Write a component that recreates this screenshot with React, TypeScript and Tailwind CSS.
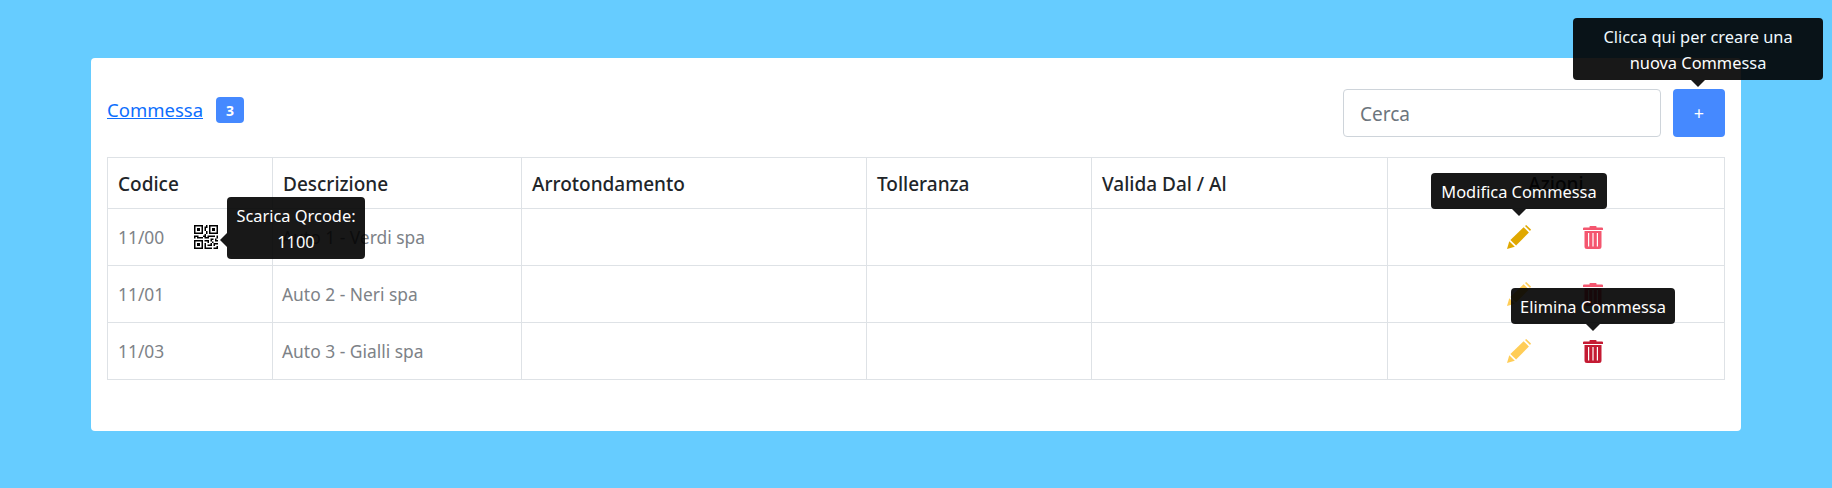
import React from 'react';
import { BsQrCode } from 'react-icons/bs';

const columns = [
    { label: 'Codice', width: 'w-[165px]' },
    { label: 'Descrizione', width: 'w-[249px]' },
    { label: 'Arrotondamento', width: 'w-[345px]' },
    { label: 'Tolleranza', width: 'w-[225px]' },
    { label: 'Valida Dal / Al', width: 'w-[296px]' },
];

const rows = [
    { code: '11/00', desc: 'Auto 1 - Verdi spa', qr: true, pencil: 'text-[#e0a800]', trash: 'text-[#f4566f]' },
    { code: '11/01', desc: 'Auto 2 - Neri spa', qr: false, pencil: 'text-[#ffcd57]', trash: 'text-[#f4566f]' },
    { code: '11/03', desc: 'Auto 3 - Gialli spa', qr: false, pencil: 'text-[#ffcd57]', trash: 'text-[#c41a33]' },
];

const PencilIcon: React.FC<{ className: string }> = ({ className }) => (
    <svg className={className} width="24" height="24" viewBox="0 0 24 24" fill="currentColor">
        <path d="M0 24 L2.3 16.2 L7.8 21.7 Z" />
        <path d="M3.4 14.9 L16.6 2.2 L21.9 7.5 L9.1 20.6 Z" />
        <path d="M18 1 L19.2 0 L24 4.6 L23 6.1 Z" />
    </svg>
);

const TrashIcon: React.FC<{ className: string }> = ({ className }) => (
    <svg className={className} width="20" height="23" viewBox="0 0 20 23" fill="currentColor">
        <path d="M6.5 0.6 Q6.5 0 7.2 0 H12.8 Q13.5 0 13.5 0.6 V1.4 H19 Q20 1.4 20 2.4 V4 H0 V2.4 Q0 1.4 1 1.4 H6.5 Z" />
        <path
            fillRule="evenodd"
            d="M1.5 5 H18.5 V20.5 Q18.5 23 16 23 H4 Q1.5 23 1.5 20.5 Z M5 7 V20.4 H6.2 V7 Z M9.4 7 V20.4 H10.6 V7 Z M13.8 7 V20.4 H15 V7 Z"
        />
    </svg>
);

const Tooltip: React.FC<{ className: string; side?: 'top' | 'right'; children: React.ReactNode }> = ({
    className,
    side = 'top',
    children,
}) => (
    <div className={`absolute z-10 opacity-90 ${className}`}>
        <div className="rounded bg-black px-2 pb-[4px] pt-[6px] text-center text-[16.4px] leading-[26px] text-white">{children}</div>
        {side === 'top' ? (
            <div className="absolute left-1/2 top-full -ml-[7px] border-x-[7px] border-t-[7px] border-x-transparent border-t-black" />
        ) : (
            <div className="absolute right-full top-[36px] border-y-[7px] border-r-[7px] border-y-transparent border-r-black" />
        )}
    </div>
);

export default function App() {
    return (
        <div className="relative h-[488px] overflow-hidden bg-[#66ccff] pl-[91px] pt-[58px] font-['Noto_Sans',sans-serif]">
            <div className="h-[373px] w-[1650px] rounded bg-white px-4 pt-[31px]">
                <div className="flex h-12 items-center justify-between">
                    <div className="flex items-center gap-[13px] pb-[6px]">
                        <a href="#" className="text-[18.5px] text-[#0d6efd] underline">
                            Commessa
                        </a>
                        <span className="flex h-[26px] w-[28px] items-center justify-center rounded bg-[#4589ff] text-[14px] font-bold text-white">
                            3
                        </span>
                    </div>
                    <div className="flex items-center gap-3">
                        <input
                            placeholder="Cerca"
                            className="h-12 w-[318px] rounded border border-[#ced4da] bg-white px-4 pt-[2px] text-[19px] text-[#6c757d] placeholder:text-[#6c757d]"
                        />
                        <button className="flex h-12 w-[52px] items-center justify-center rounded bg-[#4589ff] text-[18px] text-white">
                            +
                        </button>
                    </div>
                </div>

                <table className="mt-5 w-[1617px] table-fixed border-collapse">
                    <thead>
                        <tr className="h-[51px]">
                            {columns.map((col) => (
                                <th
                                    key={col.label}
                                    className={`${col.width} border border-[#dee2e6] px-[10px] pt-[2px] text-left text-[19px] font-medium text-[#212529]`}
                                >
                                    {col.label}
                                </th>
                            ))}
                            <th className="w-[337px] border border-[#dee2e6] pt-[2px] text-center text-[19px] font-medium text-[#212529]">
                                Azioni
                            </th>
                        </tr>
                    </thead>
                    <tbody>
                        {rows.map((row) => (
                            <tr key={row.code} className="h-[57px] text-[17.4px] text-[#7d8287]">
                                <td className="border border-[#dee2e6] px-[10px]">
                                    <div className="flex items-center">
                                        <span className="w-[76px]">{row.code}</span>
                                        {row.qr && <BsQrCode className="text-black" size={24} />}
                                    </div>
                                </td>
                                <td className="border border-[#dee2e6] px-[9px]">{row.desc}</td>
                                <td className="border border-[#dee2e6]" />
                                <td className="border border-[#dee2e6]" />
                                <td className="border border-[#dee2e6]" />
                                <td className="border border-[#dee2e6]">
                                    <div className="flex items-center justify-center gap-[52px] pr-[3px]">
                                        <PencilIcon className={row.pencil} />
                                        <TrashIcon className={row.trash} />
                                    </div>
                                </td>
                            </tr>
                        ))}
                    </tbody>
                </table>
            </div>

            <Tooltip className="left-[1573px] top-[18px] w-[250px]">
                Clicca qui per creare una
                <br />
                nuova Commessa
            </Tooltip>
            <Tooltip className="left-[1431px] top-[173px] w-[176px]">Modifica Commessa</Tooltip>
            <Tooltip className="left-[1511px] top-[288px] w-[164px]">Elimina Commessa</Tooltip>
            <Tooltip side="right" className="left-[227px] top-[197px] w-[138px]">
                Scarica Qrcode:
                <br />
                1100
            </Tooltip>
        </div>
    );
}
